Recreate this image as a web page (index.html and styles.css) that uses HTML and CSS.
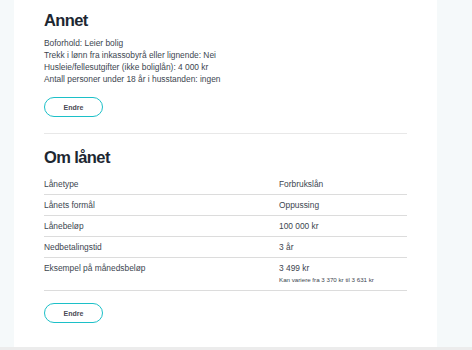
FILE: index.html
```html
<!DOCTYPE html>
<html lang="no">
<head>
  <meta charset="UTF-8" />
  <title>Søknad – oppsummering</title>
  <link rel="stylesheet" href="styles.css">
</head>
<body>

  <div class="page">
    <div class="card">

      <!-- Annet -->
      <section class="section">
        <h2>Annet</h2>
        <div class="facts">
          <p>Boforhold: Leier bolig</p>
          <p>Trekk i lønn fra inkassobyrå eller lignende: Nei</p>
          <p>Husleie/fellesutgifter (ikke boliglån): 4 000 kr</p>
          <p>Antall personer under 18 år i husstanden: ingen</p>
        </div>
        <button class="edit-btn">Endre</button>
      </section>

      <!-- Om lånet -->
      <section class="section loan">
        <h2>Om lånet</h2>
        <div class="rows">
          <div class="row">
            <div class="label">Lånetype</div>
            <div class="value">Forbrukslån</div>
          </div>
          <div class="row">
            <div class="label">Lånets formål</div>
            <div class="value">Oppussing</div>
          </div>
          <div class="row">
            <div class="label">Lånebeløp</div>
            <div class="value">100 000 kr</div>
          </div>
          <div class="row">
            <div class="label">Nedbetalingstid</div>
            <div class="value">3 år</div>
          </div>
          <div class="row">
            <div class="label">Eksempel på månedsbeløp</div>
            <div class="value">
              3 499 kr
              <small>Kan variere fra 3 370 kr til 3 631 kr</small>
            </div>
          </div>
        </div>
        <button class="edit-btn">Endre</button>
      </section>

    </div>
  </div>

</body>
</html>
```

FILE: styles.css
```css
body {
  margin: 0;
  font-family: "Liberation Sans", Arial, sans-serif;
  background: #f5f9fa;
  color: #3c4650;
  overflow: hidden;
}

.page {
  height: 347px;
  border-bottom: 3px solid #ececec;
}

.card {
  background: #ffffff;
  margin-left: 14px;
  width: 423px;
  height: 347px;
  padding: 0 30px;
  box-sizing: border-box;
}

.section {
  border-bottom: 1px solid #e8e8e8;
  padding: 9px 0 16px;
}

.section.loan {
  border-bottom: none;
  padding-top: 12px;
}

h2 {
  margin: 0;
  font-size: 16.5px;
  font-weight: bold;
  letter-spacing: -0.6px;
  color: #1d2732;
  line-height: 22px;
}

.facts {
  margin-top: 6px;
}

.facts p {
  margin: 0;
  font-size: 8.4px;
  line-height: 12px;
}

.edit-btn {
  display: block;
  margin-top: 12px;
  width: 59px;
  height: 20px;
  padding: 0;
  background: #fff;
  border: 1px solid #1cc0c8;
  border-radius: 10px;
  font-family: inherit;
  font-size: 7px;
  font-weight: bold;
  color: #4a4a55;
  cursor: pointer;
}

.rows {
  margin-top: 6px;
}

.row {
  display: flex;
  border-bottom: 1px solid #dcdcdc;
  font-size: 8.4px;
  line-height: 11px;
  padding: 5px 0 4px;
}

.label {
  width: 235px;
}

.value small {
  display: block;
  font-size: 6.2px;
  line-height: 8px;
  margin-top: 2px;
  margin-bottom: 2px;
}
```
